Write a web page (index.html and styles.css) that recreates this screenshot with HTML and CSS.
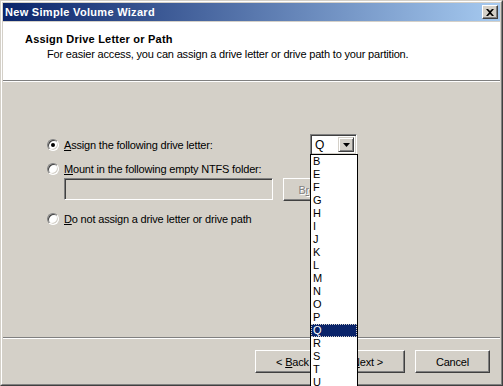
FILE: index.html
```html
<!DOCTYPE html>
<html lang="en">
<head>
    <meta charset="UTF-8">
    <title>New Simple Volume Wizard</title>
    <link rel="stylesheet" href="styles.css">
</head>
<body>
<div id="window">
    <div id="frame">
        <div class="titlebar">
            <span class="titletext">New Simple Volume Wizard</span>
            <div class="closebtn">
                <svg width="8" height="7" viewBox="0 0 8 7">
                    <path d="M0 0h2l2 2 2-2h2L5 3.5 8 7H6L4 5 2 7H0l3-3.5z" fill="#000"/>
                </svg>
            </div>
        </div>
        <div class="header">
            <div class="headtitle">Assign Drive Letter or Path</div>
            <div class="headsub">For easier access, you can assign a drive letter or drive path to your partition.</div>
        </div>
        <div class="content">
            <div class="row rowfirst">
                <span class="radio checked"></span>
                <span class="label widelabel"><u>A</u>ssign the following drive letter:</span>
                <div class="combo">
                    <span class="combovalue">Q</span>
                    <span class="combobtn">
                        <svg width="7" height="4" viewBox="0 0 7 4"><path d="M0 0h7L3.5 4z" fill="#000"/></svg>
                    </span>
                    <div class="droplist">
                        <div class="item">B</div>
                        <div class="item">E</div>
                        <div class="item">F</div>
                        <div class="item">G</div>
                        <div class="item">H</div>
                        <div class="item">I</div>
                        <div class="item">J</div>
                        <div class="item">K</div>
                        <div class="item">L</div>
                        <div class="item">M</div>
                        <div class="item">N</div>
                        <div class="item">O</div>
                        <div class="item">P</div>
                        <div class="item selected">Q</div>
                        <div class="item">R</div>
                        <div class="item">S</div>
                        <div class="item">T</div>
                        <div class="item">U</div>
                    </div>
                </div>
            </div>
            <div class="row rowsecond">
                <span class="radio"></span>
                <span class="label"><u>M</u>ount in the following empty NTFS folder:</span>
            </div>
            <div class="folderrow">
                <div class="textbox"></div>
                <div class="button disabled"><span>B<u>r</u>owse...</span></div>
            </div>
            <div class="row rowthird">
                <span class="radio"></span>
                <span class="label"><u>D</u>o not assign a drive letter or drive path</span>
            </div>
        </div>
        <div class="footer">
            <div class="button"><span>&lt; <u>B</u>ack</span></div>
            <div class="button"><span><u>N</u>ext &gt;</span></div>
            <div class="button cancel"><span>Cancel</span></div>
        </div>
    </div>
</div>
</body>
</html>
```

FILE: styles.css
```css
html, body {
    margin: 0;
    padding: 0;
    overflow: hidden;
}

body {
    font-family: "Liberation Sans", Arial, sans-serif;
    font-size: 11px;
    letter-spacing: -0.18px;
    color: #000000;
    background-color: #d4d0c8;
}

#window {
    width: 503px;
    height: 386px;
    box-sizing: border-box;
    border: 1px solid;
    border-color: #d4d0c8 #404040 #404040 #d4d0c8;
}

#frame {
    height: 100%;
    box-sizing: border-box;
    border: 1px solid;
    border-color: #ffffff #808080 #808080 #ffffff;
    padding: 1px;
    background-color: #d4d0c8;
    display: flex;
    flex-direction: column;
}

.titlebar {
    height: 18px;
    flex: none;
    display: flex;
    align-items: center;
    justify-content: space-between;
    padding: 0 2px 0 2px;
    background: linear-gradient(to right, #0a246a, #a6caf0);
}

.titletext {
    color: #ffffff;
    font-weight: bold;
    font-size: 11px;
    letter-spacing: 0.3px;
}

.closebtn {
    width: 16px;
    height: 14px;
    box-sizing: border-box;
    display: flex;
    align-items: center;
    justify-content: center;
    background-color: #d4d0c8;
    border: 1px solid;
    border-color: #ffffff #404040 #404040 #ffffff;
    box-shadow: inset -1px -1px #808080;
}

.header {
    margin-top: 1px;
    height: 58px;
    flex: none;
    box-sizing: border-box;
    background-color: #ffffff;
    padding: 11px 0 0 22px;
}

.headtitle {
    font-weight: bold;
    line-height: 13px;
    letter-spacing: 0.22px;
}

.headsub {
    margin-top: 2px;
    padding-left: 22px;
    line-height: 13px;
}

.content {
    flex: 1;
    border-top: 1px solid #808080;
    box-shadow: inset 0 1px #ffffff;
    padding: 53px 0 0 44px;
}

.row {
    display: flex;
    align-items: center;
}

.rowfirst {
    height: 21px;
}

.rowsecond {
    height: 14px;
    margin-top: 7px;
}

.rowthird {
    height: 14px;
    margin-top: 11px;
}

.radio {
    width: 12px;
    height: 12px;
    box-sizing: border-box;
    border-radius: 50%;
    border: 1px solid;
    border-color: #808080 #ffffff #ffffff #808080;
    box-shadow: inset 1px 1px #404040, inset -1px -1px #d4d0c8;
    background-color: #ffffff;
    display: flex;
    align-items: center;
    justify-content: center;
    flex: none;
}

.radio.checked::after {
    content: "";
    width: 4px;
    height: 4px;
    border-radius: 50%;
    background-color: #000000;
}

.label {
    margin-left: 5px;
    white-space: nowrap;
}

.widelabel {
    width: 246px;
}

.combo {
    position: relative;
    width: 47px;
    height: 21px;
    box-sizing: border-box;
    border: 1px solid;
    border-color: #808080 #ffffff #ffffff #808080;
    box-shadow: inset 1px 1px #404040, inset -1px -1px #d4d0c8;
    background-color: #ffffff;
    padding: 2px;
    display: flex;
    align-items: center;
    justify-content: space-between;
}

.combovalue {
    padding-left: 2px;
    font-size: 12px;
}

.combobtn {
    width: 16px;
    height: 15px;
    box-sizing: border-box;
    background-color: #d4d0c8;
    border: 1px solid;
    border-color: #d4d0c8 #404040 #404040 #d4d0c8;
    box-shadow: inset 1px 1px #ffffff, inset -1px -1px #808080;
    display: flex;
    align-items: center;
    justify-content: center;
}

.droplist {
    position: absolute;
    left: -1px;
    top: 19px;
    width: 48px;
    box-sizing: border-box;
    border: 1px solid #000000;
    background-color: #ffffff;
    z-index: 5;
}

.item {
    height: 13px;
    line-height: 13px;
    font-size: 11px;
    padding-left: 2px;
}

.item.selected {
    background-color: #0a246a;
    color: #ffffff;
    outline: 1px dotted #d4d0c8;
    outline-offset: -1px;
}

.folderrow {
    display: flex;
    margin-top: 2px;
    padding-left: 17px;
}

.textbox {
    width: 209px;
    height: 22px;
    box-sizing: border-box;
    border: 1px solid;
    border-color: #808080 #ffffff #ffffff #808080;
    box-shadow: inset 1px 1px #404040, inset -1px -1px #d4d0c8;
    background-color: #d4d0c8;
}

.button {
    width: 75px;
    height: 23px;
    box-sizing: border-box;
    border: 1px solid;
    border-color: #ffffff #404040 #404040 #ffffff;
    box-shadow: inset -1px -1px #808080;
    background-color: #d4d0c8;
    display: flex;
    align-items: center;
    justify-content: center;
    white-space: nowrap;
}

.folderrow .button {
    margin-left: 10px;
}

.button.disabled {
    color: #808080;
    text-shadow: 1px 1px #ffffff;
}

.footer {
    flex: none;
    height: 46px;
    box-sizing: border-box;
    border-top: 1px solid #808080;
    box-shadow: inset 0 1px #ffffff;
    padding: 12px 0 0 252px;
    display: flex;
}

.cancel {
    margin-left: 10px;
}
```
